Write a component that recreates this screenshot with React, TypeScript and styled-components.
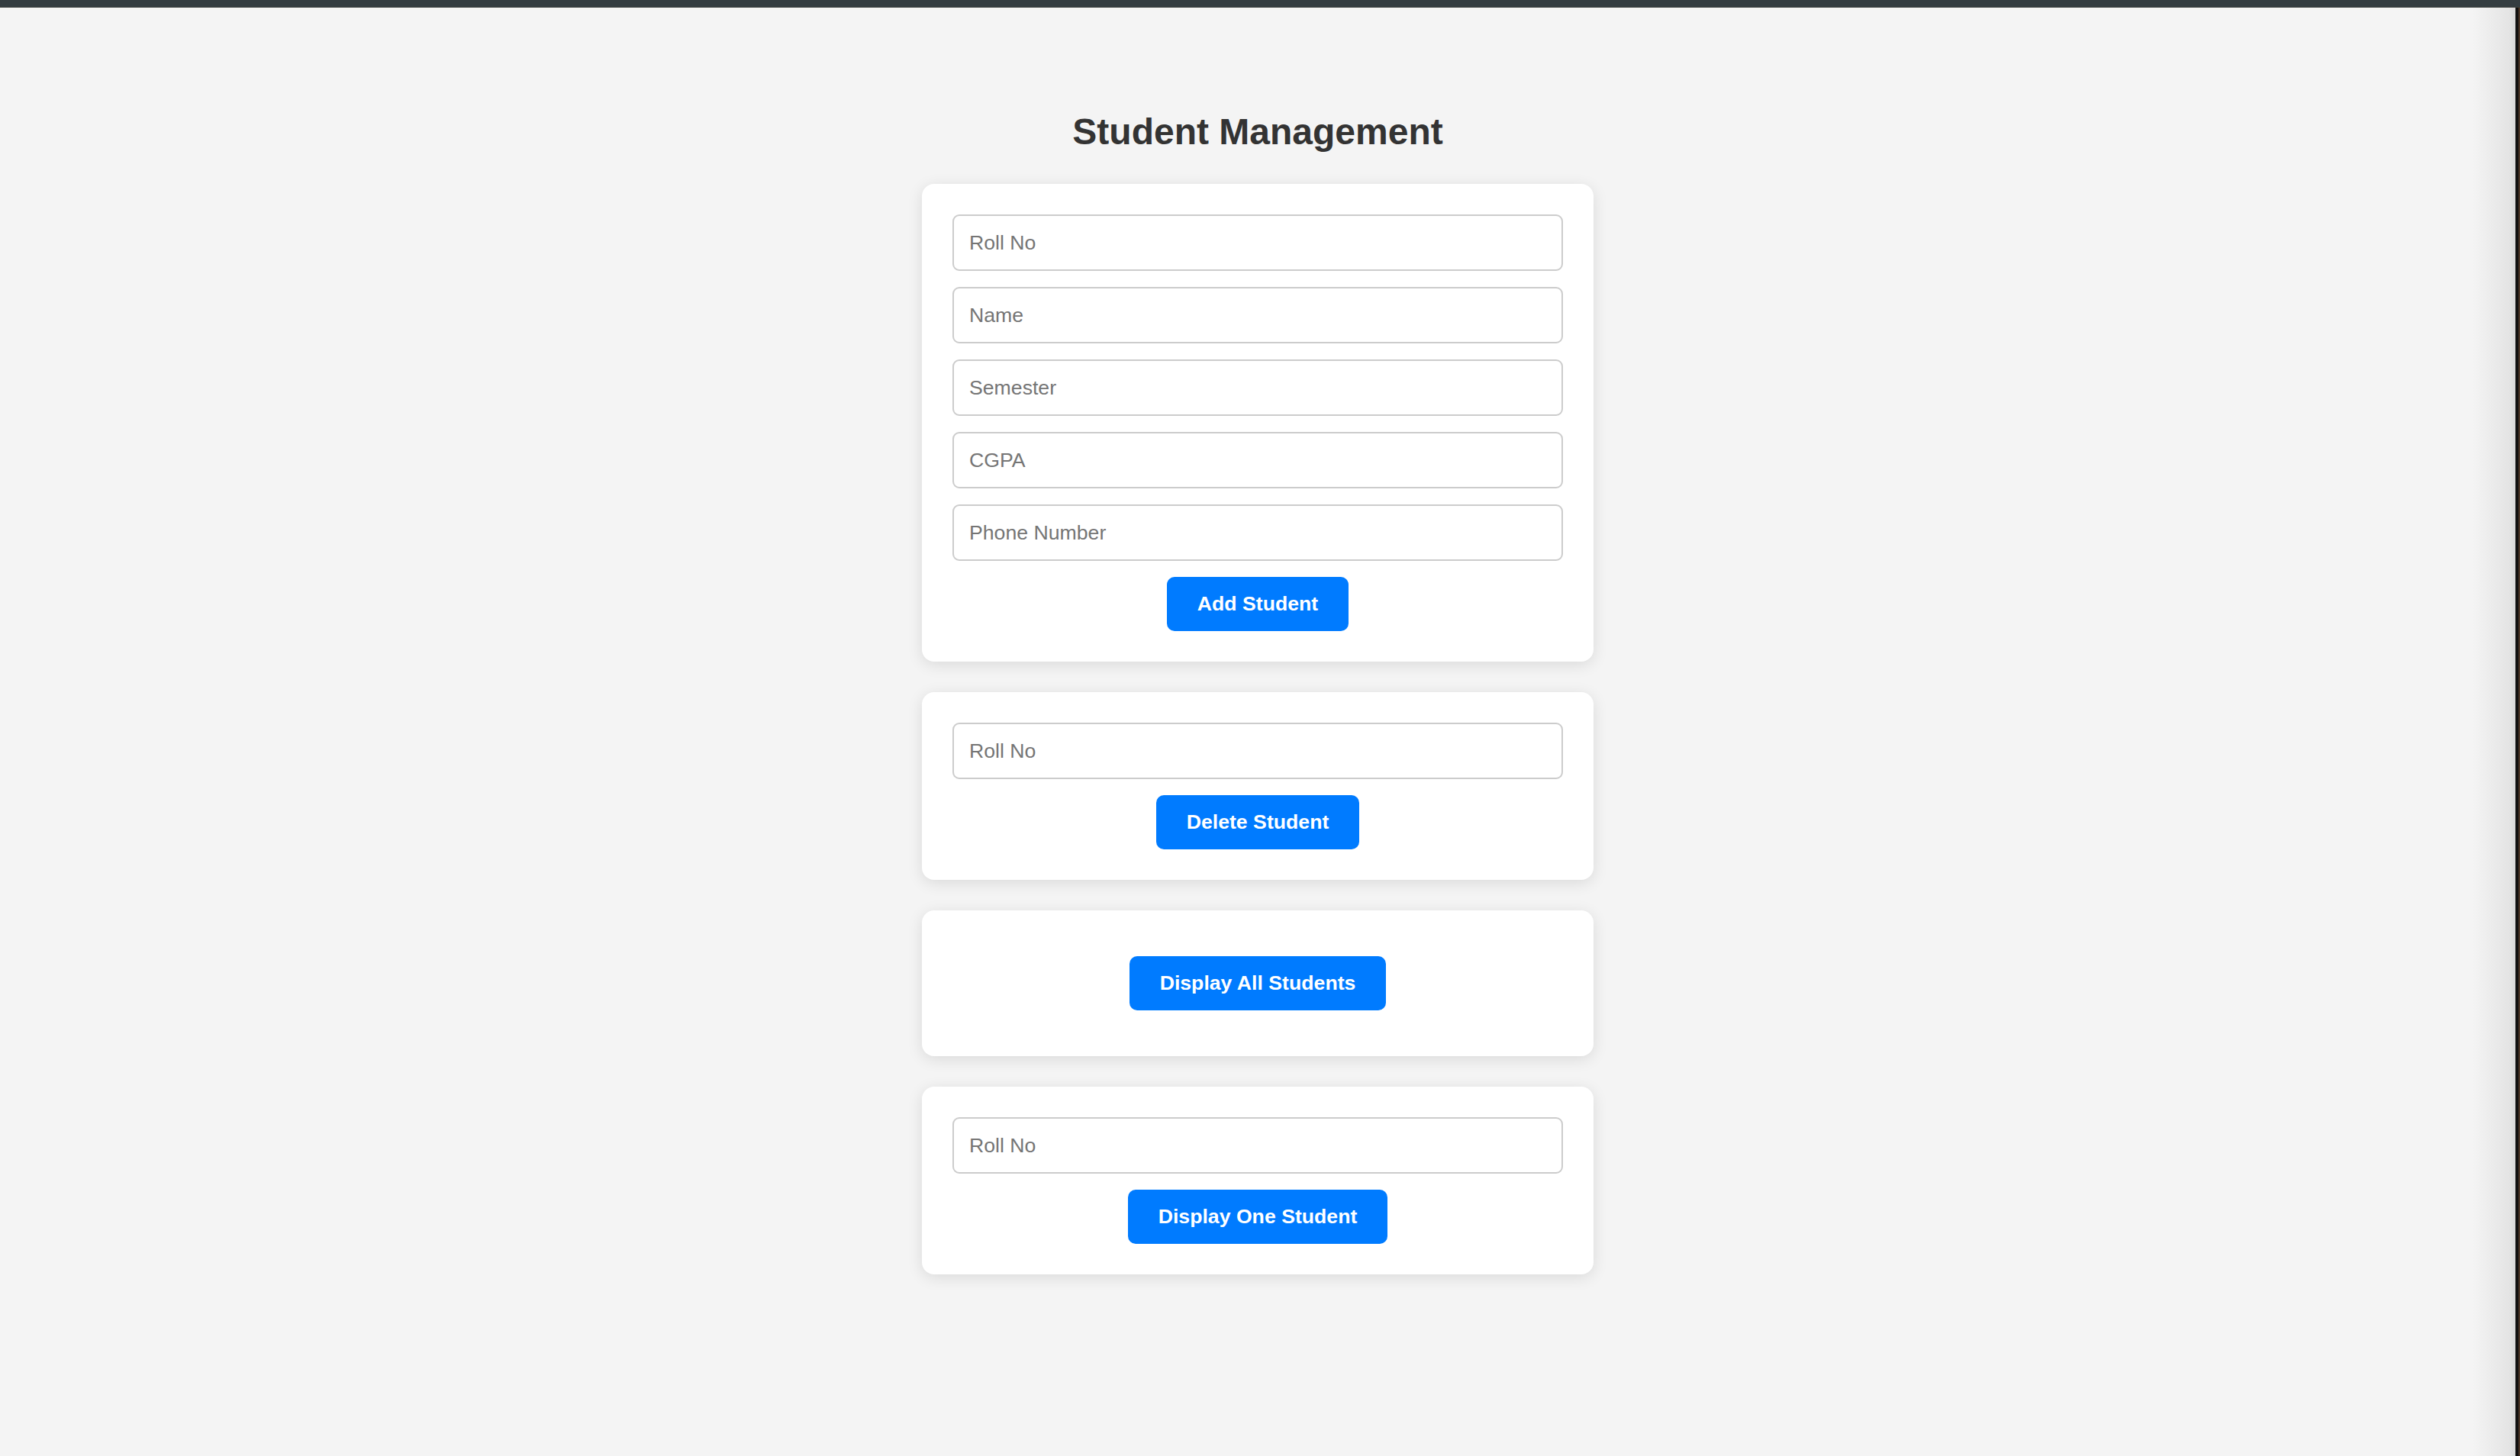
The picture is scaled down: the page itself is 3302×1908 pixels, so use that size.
import React from 'react';
import styled, { createGlobalStyle } from 'styled-components';

const GlobalStyle = createGlobalStyle`
  html, body {
    margin: 0;
    padding: 0;
    height: 100%;
  }
  body {
    font-family: "Liberation Sans", Arial, sans-serif;
    background: #f4f4f4;
  }
  #root {
    height: 100%;
  }
`

const Frame = styled.div`
  display: flex;
  flex-direction: column;
  width: 3302px;
  height: 1908px;
  overflow: hidden;
`

const TitleBar = styled.div`
  height: 9px;
  flex-shrink: 0;
  background: #343d41;
  border-bottom: 1px solid #3d4240;
`

const Body = styled.div`
  flex: 1;
  display: flex;
  min-height: 0;
`

const Page = styled.main`
  flex: 1;
  display: flex;
  flex-direction: column;
  align-items: center;
  padding-top: 135px;
  background: linear-gradient(to right, #f4f4f4 0, #f4f4f4 calc(100% - 56px), #e4e4e4 calc(100% - 8px), #d8d8d8 100%);
`

const WindowEdge = styled.div`
  width: 6px;
  flex-shrink: 0;
  background: linear-gradient(to right, #111 0, #111 4px, #4a3424 4px);
`

const Title = styled.h2`
  margin: 0 0 40px;
  font-size: 48px;
  line-height: 56px;
  font-weight: 700;
  color: #333;
`

const Card = styled.section<{ $padY?: number }>`
  box-sizing: border-box;
  width: 880px;
  padding: ${p => p.$padY ?? 40}px 40px;
  margin-bottom: 40px;
  background: #fff;
  border-radius: 16px;
  box-shadow: 0 4px 20px rgba(0, 0, 0, 0.11);
  display: flex;
  flex-direction: column;
  align-items: center;
  gap: 21px;
`

const Field = styled.input`
  box-sizing: border-box;
  width: 100%;
  height: 74px;
  margin: 0;
  padding: 0 20px;
  border: 2px solid #ccc;
  border-radius: 9px;
  background: #fff;
  font-family: "Liberation Sans", Arial, sans-serif;
  font-size: 26.67px;
  color: #333;
  outline: none;

  &::placeholder {
    color: #757575;
  }
`

const Button = styled.button`
  box-sizing: border-box;
  height: 71px;
  padding: 0 40px;
  border: none;
  border-radius: 10px;
  background: #007bff;
  color: #fff;
  font-family: "Liberation Sans", Arial, sans-serif;
  font-size: 26.67px;
  font-weight: 700;
  cursor: pointer;
`

const addFields = ['Roll No', 'Name', 'Semester', 'CGPA', 'Phone Number'];

export default function App() {
  return (
    <>
      <GlobalStyle />
      <Frame>
        <TitleBar />
        <Body>
          <Page>
            <Title>Student Management</Title>

            <Card>
              {addFields.map(f => (
                <Field key={f} placeholder={f} />
              ))}
              <Button>Add Student</Button>
            </Card>

            <Card>
              <Field placeholder="Roll No" />
              <Button>Delete Student</Button>
            </Card>

            <Card $padY={60}>
              <Button>Display All Students</Button>
            </Card>

            <Card>
              <Field placeholder="Roll No" />
              <Button>Display One Student</Button>
            </Card>
          </Page>
          <WindowEdge />
        </Body>
      </Frame>
    </>
  );
}
